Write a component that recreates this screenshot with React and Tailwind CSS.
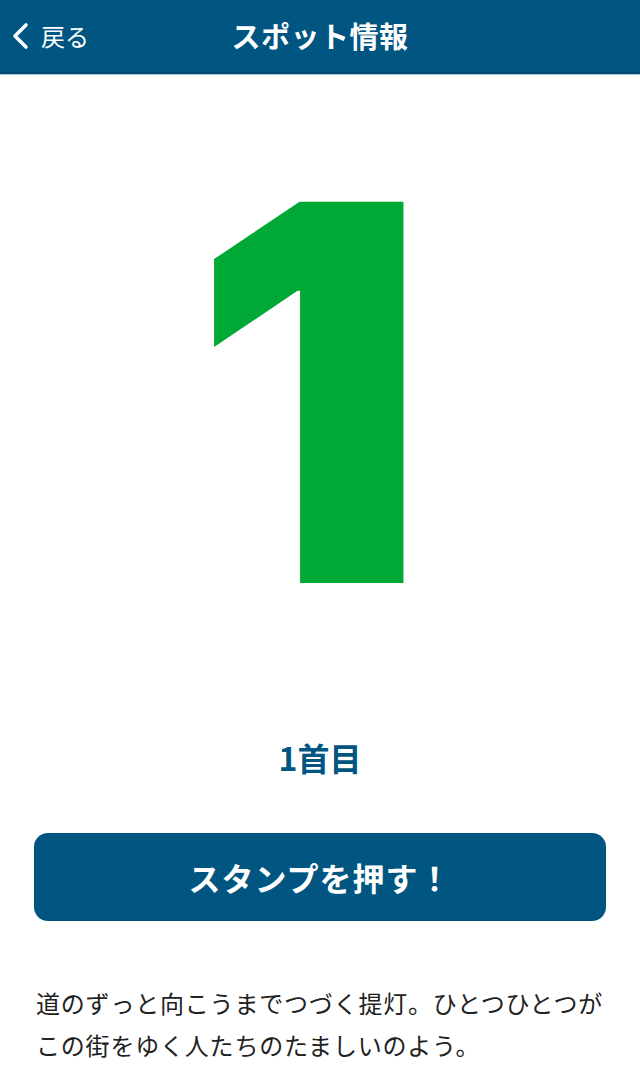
import React from "react";

const JP = "font-['Noto_Sans_CJK_JP','Noto_Sans',sans-serif]";

const Header = ({ title, onBack }) => (
  <div>
    <header className="relative flex h-[72px] items-center justify-center bg-[#005680]">
      <button
        onClick={onBack}
        className="absolute left-[10px] top-0 flex h-full items-center gap-[11px] text-white"
      >
        <svg width="20" height="28" viewBox="0 0 20 28" fill="none">
          <path d="M16 3 L5 14 L16 25" stroke="white" strokeWidth="3.6" strokeLinecap="round" strokeLinejoin="round" />
        </svg>
        <span className="text-[24px] font-normal">戻る</span>
      </button>
      <h1 className="text-[29px] font-bold tracking-[0.5px] text-white">{title}</h1>
    </header>
    <div className="h-[2px] bg-[#004a70]" />
    <div className="h-px bg-[#a6d2e4]" />
  </div>
);

export default function App() {
  const spot = {
    number: 1,
    label: "1首目",
    text: "道のずっと向こうまでつづく提灯。ひとつひとつがこの街をゆく人たちのたましいのよう。",
  };

  return (
    <div className={`min-h-[1088px] bg-white ${JP}`}>
      <Header title="スポット情報" onBack={() => {}} />

      <div className="flex h-[630px] items-start justify-center pt-[108px]">
        <span className="font-['Inter',sans-serif] text-[524px] font-black leading-[0.8] tracking-tight text-[#00a835] pr-[34px]">
          {spot.number}
        </span>
      </div>

      <p className="mt-[36px] text-center text-[32px] font-bold leading-none text-[#005680]">{spot.label}</p>

      <div className="px-[34px] pt-[60px]">
        <button className="flex h-[88px] w-full items-center justify-center rounded-[14px] bg-[#005680] text-[32px] font-bold tracking-[1px] text-white">
          スタンプを押す！
        </button>
      </div>

      <p className="px-[36px] pt-[61px] text-[24px] leading-[42px] tracking-[0.8px] text-[#222]">{spot.text}</p>
    </div>
  );
}
